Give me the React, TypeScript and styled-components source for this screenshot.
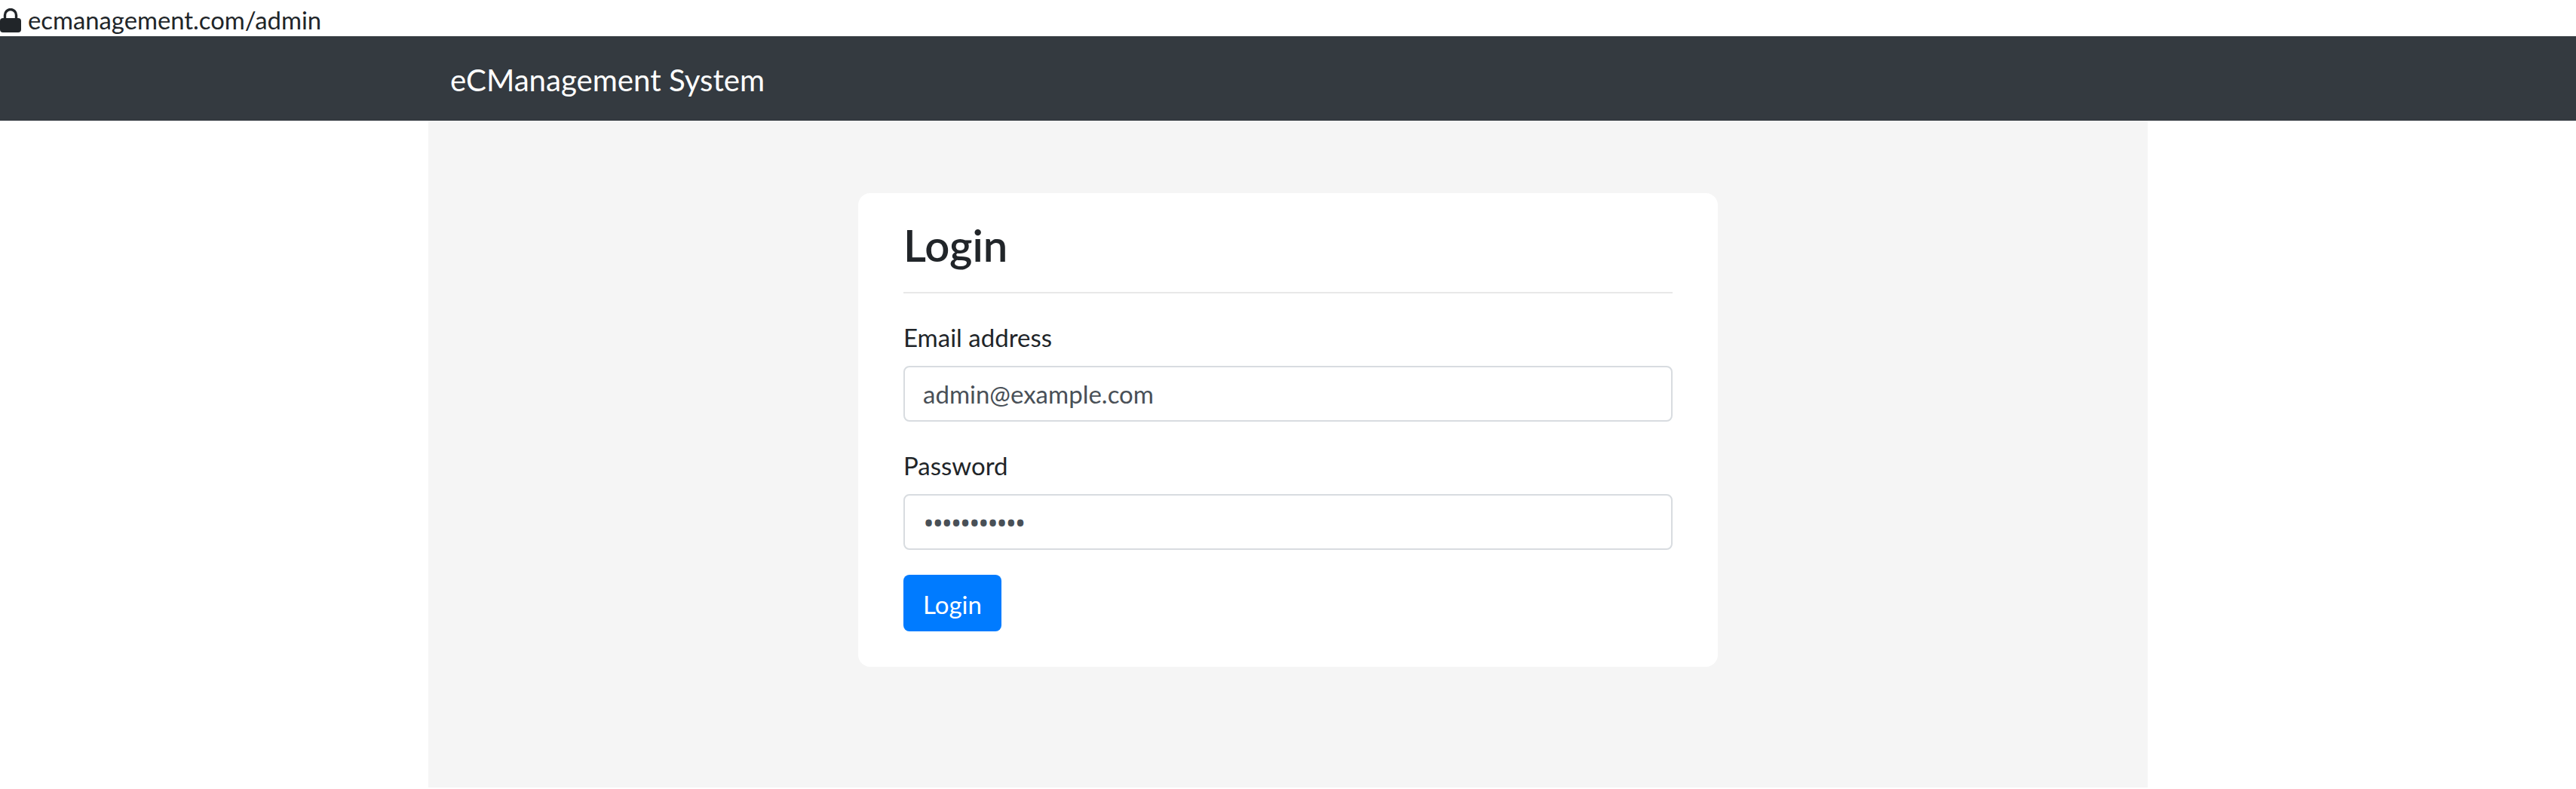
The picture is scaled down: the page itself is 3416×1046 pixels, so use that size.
import React from "react";
import styled, { createGlobalStyle } from "styled-components";

const Global = createGlobalStyle`
  html, body { margin: 0; padding: 0; background: #fff; }
  body { font-family: "Lato", "Open Sans", sans-serif; color: #212529; }
`;
const AddressBar = styled.div`
  height: 48px; box-sizing: border-box; padding-top: 7px; display: flex; align-items: flex-start; gap: 9px;
  font-size: 32.8px; line-height: 40px; color: #212529;
`;
const LockIcon = styled.svg`
  flex: none; width: 28px; height: 32px; margin-top: 4px;
`;
const NavBar = styled.header`
  height: 112px; background: #343a40; color: #fff;
`;
const NavInner = styled.div`
  width: 2280px; margin: 0 auto; padding: 2px 30px 0 29px; box-sizing: border-box; height: 100%;
  display: flex; align-items: center; font-size: 40.2px;
`;
const Main = styled.main`
  width: 2280px; height: 884px; margin: 0 auto; background: #f5f5f5; padding-top: 96px; box-sizing: border-box;
`;
const Card = styled.form`
  width: 1140px; height: 628px; margin: 0 auto; background: #fff; border-radius: 16px; padding: 34px 60px 0; box-sizing: border-box;
`;
const Title = styled.h2`
  margin: 0; height: 99px; box-sizing: border-box; font-size: 58px; font-weight: 600; line-height: 70px;
  border-bottom: 2px solid #e8e8e8;
`;
const Field = styled.div`
  margin-top: 38px;
`;
const Label = styled.label`
  display: block; font-size: 33px; line-height: 40px; height: 40px; margin-bottom: 18px;
`;
const Input = styled.input`
  display: block; width: 100%; height: 74px; box-sizing: border-box; border: 2px solid #d8dce0; border-radius: 8px;
  padding: 0 24px; font: inherit; font-size: 33px; color: #495057; background: #fff; outline: none;
`;
const PasswordInput = styled(Input)`
  font-family: "Open Sans", sans-serif; font-size: 40px; letter-spacing: -2.9px;
`;
const Button = styled.button`
  display: block; margin-top: 33px; width: 130px; height: 75px; border: 0; border-radius: 8px; background: #007bff;
  color: #fff; font: inherit; font-size: 33px; padding: 2px 0 0;
`;
export default function App() {
  return (
    <>
      <Global />
      <AddressBar>
        <LockIcon viewBox="0 0 28 32">
          <path d="M6.5 14V9a7.5 7.5 0 0 1 15 0v5" fill="none" stroke="#212529" strokeWidth="3.4" />
          <rect x="0" y="13" width="28" height="19" rx="4" fill="#212529" />
        </LockIcon>
        <span>ecmanagement.com/admin</span>
      </AddressBar>
      <NavBar><NavInner>eCManagement System</NavInner></NavBar>
      <Main>
        <Card>
          <Title>Login</Title>
          <Field><Label>Email address</Label><Input defaultValue="admin@example.com" /></Field>
          <Field><Label>Password</Label><PasswordInput type="password" defaultValue="password123" /></Field>
          <Button type="button">Login</Button>
        </Card>
      </Main>
    </>
  );
}
